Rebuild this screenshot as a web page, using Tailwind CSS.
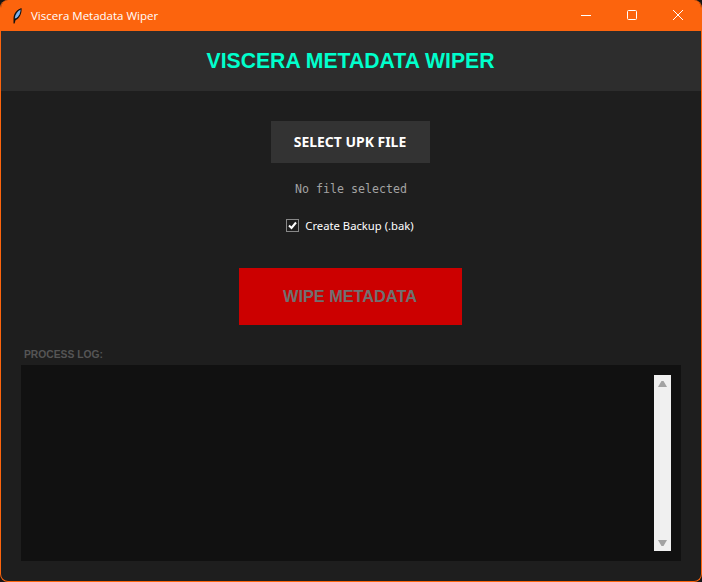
<!DOCTYPE html>
<html lang="en">
<head>
    <meta charset="UTF-8">
    <title>Viscera Metadata Wiper</title>
    <script src="https://cdn.jsdelivr.net/npm/@tailwindcss/browser@4"></script>
</head>
<body class="bg-[#161616] overflow-hidden">
    <div class="flex flex-col w-[702px] h-[582px] rounded-[8px] overflow-hidden border border-t-0 border-[#fc640d] bg-[#1e1e1e]">
        <!-- title bar -->
        <div class="flex items-center h-[31px] shrink-0 -mx-px bg-[#fc640d] text-white">
            <svg class="ml-[12px] w-[16px] h-[16px]" viewBox="0 0 16 16">
                <path d="M1.5 15.5 L1.5 10 C2 5 5 1.5 9.5 0 C10 4 8.5 8.5 5.5 11 L3.5 12.2 L2.6 15.5 Z" fill="#111"/>
                <path d="M2.7 10.5 C3.2 6.5 5.5 3 8.6 1.5 C8.6 4.5 7.2 8 4.6 10 Z" fill="#7fb4ee"/>
            </svg>
            <span class="ml-[3px] font-['Open_Sans'] text-[11.5px]">Viscera Metadata Wiper</span>
            <div class="ml-auto mr-[1px] flex h-full">
                <div class="w-[46px] pt-[10px] flex justify-center">
                    <svg class="w-[10px] h-[10px]" viewBox="0 0 10 10"><path d="M0 5.5 H10" stroke="#fff" stroke-width="1"/></svg>
                </div>
                <div class="w-[46px] pt-[10px] flex justify-center">
                    <svg class="w-[10px] h-[10px]" viewBox="0 0 10 10"><rect x="0.5" y="0.5" width="9" height="9" rx="1" fill="none" stroke="#fff" stroke-width="1"/></svg>
                </div>
                <div class="w-[46px] pt-[10px] flex justify-center">
                    <svg class="w-[10px] h-[10px]" viewBox="0 0 10 10"><path d="M0 0 L10 10 M10 0 L0 10" stroke="#fff" stroke-width="1"/></svg>
                </div>
            </div>
        </div>

        <!-- header -->
        <div class="flex items-center justify-center h-[60px] shrink-0 pr-[1px] bg-[#2d2d2d]">
            <h1 class="font-['Liberation_Sans'] font-bold text-[21.2px] text-[#00ffcc]">VISCERA METADATA WIPER</h1>
        </div>

        <!-- controls -->
        <div class="flex flex-col items-center pt-[30px] pr-[2px]">
            <button class="w-[159px] h-[42px] bg-[#333333] text-white font-['Noto_Sans'] font-bold text-[13.95px]">SELECT UPK FILE</button>
            <p class="mt-[17px] ml-[2px] h-[18px] pt-[1px] leading-[17px] font-['DejaVu_Sans_Mono'] text-[11.62px] text-[#a3a3a3]">No file selected</p>
            <label class="mt-[19px] h-[17px] flex items-center gap-[6px] text-white font-['Noto_Sans'] text-[11.25px]">
                <span class="w-[13px] h-[13px] flex items-center justify-center bg-[#1e1e1e] border border-[#888888]">
                    <svg class="w-[11px] h-[11px]" viewBox="0 0 11 11"><path d="M2 5.5 L4.5 8 L9 2.5" fill="none" stroke="#fff" stroke-width="2"/></svg>
                </span>
                <span class="pt-[1px]">Create Backup (.bak)</span>
            </label>
            <button class="mt-[34px] w-[223px] h-[57px] bg-[#cc0000] text-[#707070] font-['Liberation_Sans'] font-bold text-[16.3px]">WIPE METADATA</button>
        </div>

        <!-- log -->
        <div class="flex flex-col flex-1 px-[20px] pb-[20px] pt-[24px]">
            <div class="h-[16px] pl-[3px] leading-[12px] font-['Liberation_Sans'] font-bold text-[10.3px] text-[#555555]">PROCESS LOG:</div>
            <div class="flex flex-1 justify-end p-[10px] bg-[#111111]">
                <div class="flex flex-col justify-between items-center w-[17px] pt-[6px] pb-[5px] bg-[#f0f0f0]">
                    <svg class="w-[9px] h-[6px]" viewBox="0 0 9 6"><path d="M3.5 0 H5.5 L9 6 H0 Z" fill="#a3a3a3"/></svg>
                    <svg class="w-[9px] h-[6px]" viewBox="0 0 9 6"><path d="M0 0 H9 L5.5 6 H3.5 Z" fill="#a3a3a3"/></svg>
                </div>
            </div>
        </div>
    </div>
</body>
</html>
